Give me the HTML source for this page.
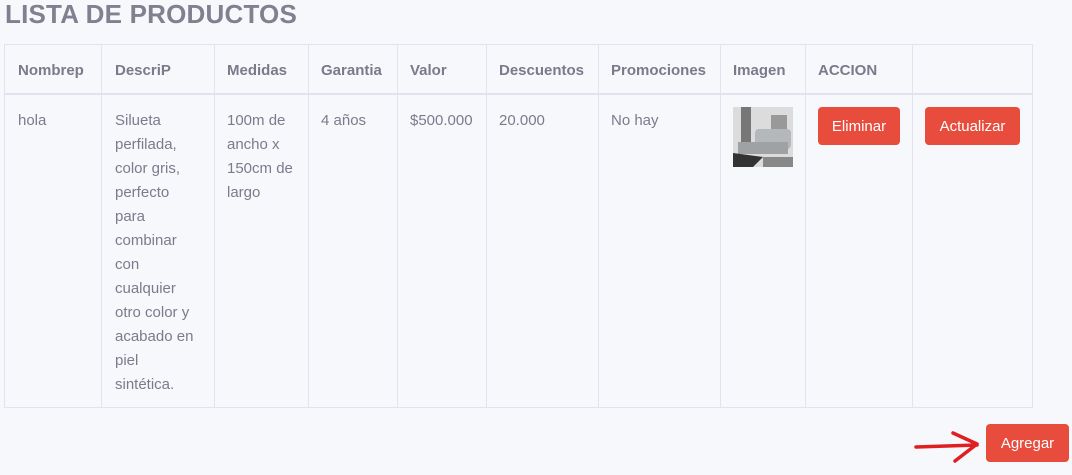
<!DOCTYPE html>
<html><head><style>
body{margin:0;width:1072px;height:475px;background:#f7f8fc;font-family:"Liberation Sans",sans-serif;color:#7b7b8c;position:relative;overflow:hidden}
h1{position:absolute;left:5px;top:-1px;margin:0;font-size:26px;font-weight:bold;color:#808090;letter-spacing:0.2px}
.v{position:absolute;top:44px;height:363px;width:1px;background:#e3e3ef}
.h{position:absolute;left:4px;width:1029px;height:1px;background:#e3e3ef}
.t{position:absolute;font-size:15px;line-height:24px}
.th{position:absolute;top:62px;font-size:15px;font-weight:bold;color:#7a7a8a}
.btn{position:absolute;background:#e74c3c;color:#fff;border-radius:4px;font-size:15px;text-align:center;line-height:40px;height:38px}
</style></head><body>
<h1>LISTA DE PRODUCTOS</h1>
<div class="h" style="top:44px"></div>
<div class="h" style="top:93px;height:2px"></div>
<div class="h" style="top:407px"></div>
<div class="v" style="left:4px"></div><div class="v" style="left:101px"></div><div class="v" style="left:214px"></div><div class="v" style="left:308px"></div><div class="v" style="left:397px"></div><div class="v" style="left:486px"></div><div class="v" style="left:598px"></div><div class="v" style="left:720px"></div><div class="v" style="left:805px"></div><div class="v" style="left:912px"></div><div class="v" style="left:1032px"></div>
<div class="th" style="left:18px">Nombrep</div>
<div class="th" style="left:115px">DescriP</div>
<div class="th" style="left:227px">Medidas</div>
<div class="th" style="left:321px">Garantia</div>
<div class="th" style="left:410px">Valor</div>
<div class="th" style="left:499px">Descuentos</div>
<div class="th" style="left:611px">Promociones</div>
<div class="th" style="left:733px">Imagen</div>
<div class="th" style="left:818px">ACCION</div>
<div class="t" style="left:18px;top:109px">hola</div>
<div class="t" style="left:115px;top:109px;width:95px">Silueta<br>perfilada,<br>color gris,<br>perfecto<br>para<br>combinar<br>con<br>cualquier<br>otro color y<br>acabado en<br>piel<br>sintética.</div>
<div class="t" style="left:227px;top:109px">100m de<br>ancho x<br>150cm de<br>largo</div>
<div class="t" style="left:321px;top:109px">4 años</div>
<div class="t" style="left:410px;top:109px">$500.000</div>
<div class="t" style="left:499px;top:109px">20.000</div>
<div class="t" style="left:611px;top:109px">No hay</div>
<svg style="position:absolute;left:733px;top:107px" width="60" height="60"><rect width="60" height="60" fill="#dcdcdc"/><rect x="8" y="0" width="10" height="40" fill="#777"/><rect x="38" y="8" width="16" height="14" fill="#999"/><rect x="22" y="22" width="36" height="20" rx="4" fill="#b5b8bb"/><rect x="5" y="35" width="50" height="12" fill="#9ea2a5"/><polygon points="0,46 30,50 20,60 0,60" fill="#333"/><rect x="30" y="50" width="30" height="10" fill="#888"/></svg>
<div class="btn" style="left:818px;top:107px;width:82px">Eliminar</div>
<div class="btn" style="left:925px;top:107px;width:95px">Actualizar</div>
<div class="btn" style="left:986px;top:424px;width:83px">Agregar</div>
<svg style="position:absolute;left:905px;top:428px" width="80" height="40"><path d="M11 19 L72 17" stroke="#e02020" stroke-width="3.5" fill="none" stroke-linecap="round"/><path d="M48 5 L72 16 L50 33" stroke="#e02020" stroke-width="3.5" fill="none" stroke-linecap="round" stroke-linejoin="round"/></svg>
</body></html>
